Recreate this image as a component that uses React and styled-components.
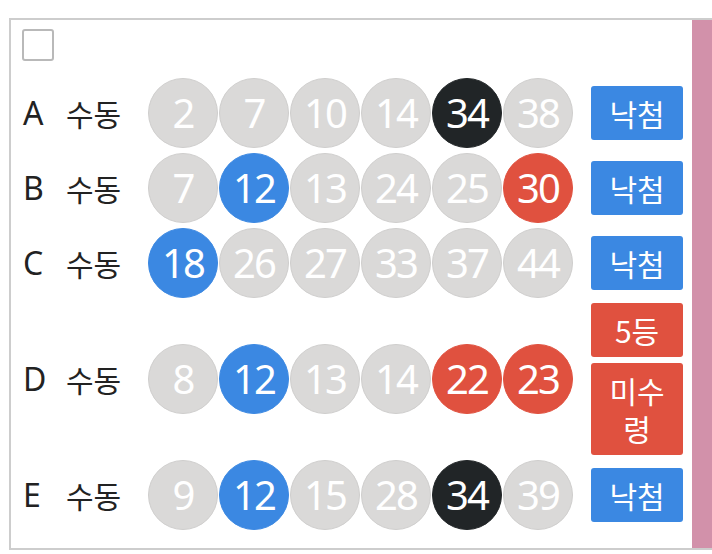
import React from "react";
import styled, { createGlobalStyle } from "styled-components";

const GlobalStyle = createGlobalStyle`
  html, body {
    margin: 0;
    background: #fff;
    overflow: hidden;
  }
  body {
    font-family: "Noto Sans", "Noto Sans CJK KR", sans-serif;
  }
`;

const games = [
  { label: "A", balls: [2, 7, 10, 14, 34, 38], result: ["낙첨"] },
  { label: "B", balls: [7, 12, 13, 24, 25, 30], result: ["낙첨"] },
  { label: "C", balls: [18, 26, 27, 33, 37, 44], result: ["낙첨"] },
  { label: "D", balls: [8, 12, 13, 14, 22, 23], result: ["5등", "미수령"] },
  { label: "E", balls: [9, 12, 15, 28, 34, 39], result: ["낙첨"] },
];

// matched numbers from the draw, with the colour each ball gets
const hits = {
  A: { 34: "dark" },
  B: { 12: "blue", 30: "red" },
  C: { 18: "blue" },
  D: { 12: "blue", 22: "red", 23: "red" },
  E: { 12: "blue", 34: "dark" },
};

const ballColors = {
  gray: "#dad9d8",
  blue: "#3b88e2",
  red: "#e0513f",
  dark: "#212527",
};

const App = () => {
  return (
    <>
      <GlobalStyle />
      <Page>
        <Box>
          <Content>
            <Check type="checkbox" />
            {games.map((g) => (
              <Row key={g.label}>
                <Label>{g.label}</Label>
                <Mode>수동</Mode>
                <Balls>
                  {g.balls.map((n) => (
                    <Ball key={n} $tone={hits[g.label][n] || "gray"}>
                      {n}
                    </Ball>
                  ))}
                </Balls>
                <Results>
                  {g.result.map((r) => (
                    <Badge key={r} $win={r !== "낙첨"}>
                      {r}
                    </Badge>
                  ))}
                </Results>
              </Row>
            ))}
          </Content>
          <SideBar />
        </Box>
      </Page>
    </>
  );
};

export default App;

const Page = styled.div`
  padding: 18px 0 0 9px;
`;

const Box = styled.div`
  display: flex;
  width: 705px;
  height: 532px;
  box-sizing: border-box;
  border: 2px solid #cdcdcd;
`;

const Content = styled.div`
  flex: 1;
  padding: 9px 9px 0 11px;
  display: flex;
  flex-direction: column;
`;

const SideBar = styled.div`
  width: 20px;
  flex-shrink: 0;
  background: #d291aa;
`;

const Check = styled.input`
  appearance: none;
  margin: 0 0 14px 0;
  width: 32px;
  height: 32px;
  box-sizing: border-box;
  border: 2px solid #b9b9b9;
  border-radius: 3px;
  background: #fff;
`;

const Row = styled.div`
  display: grid;
  grid-template-columns: 44px 82px 425px 1fr;
  align-items: center;
  padding: 2.5px 0;
`;

const Label = styled.div`
  font-size: 32px;
  color: #222;
  padding-left: 1px;
`;

const Mode = styled.div`
  font-size: 30px;
  color: #222;
  font-family: "Noto Sans CJK KR", sans-serif;
`;

const Balls = styled.div`
  display: flex;
  gap: 1px;
`;

const Ball = styled.div`
  width: 70px;
  height: 70px;
  border-radius: 50%;
  box-sizing: border-box;
  background: ${(p) => ballColors[p.$tone]};
  border: 1px solid ${(p) => (p.$tone === "gray" ? "#cfcecd" : ballColors[p.$tone])};
  color: #fff;
  display: flex;
  align-items: center;
  justify-content: center;
  font-size: 40px;
  letter-spacing: -2px;
  line-height: 1;
`;

const Results = styled.div`
  display: flex;
  flex-direction: column;
  gap: 6px;
  justify-self: end;
  width: 92px;
`;

const Badge = styled.div`
  background: ${(p) => (p.$win ? "#e0513f" : "#3b88e2")};
  color: #fff;
  border-radius: 3px;
  padding: 8px 12px;
  font-size: 30px;
  line-height: 38px;
  text-align: center;
  font-family: "Noto Sans CJK KR", sans-serif;
`;
